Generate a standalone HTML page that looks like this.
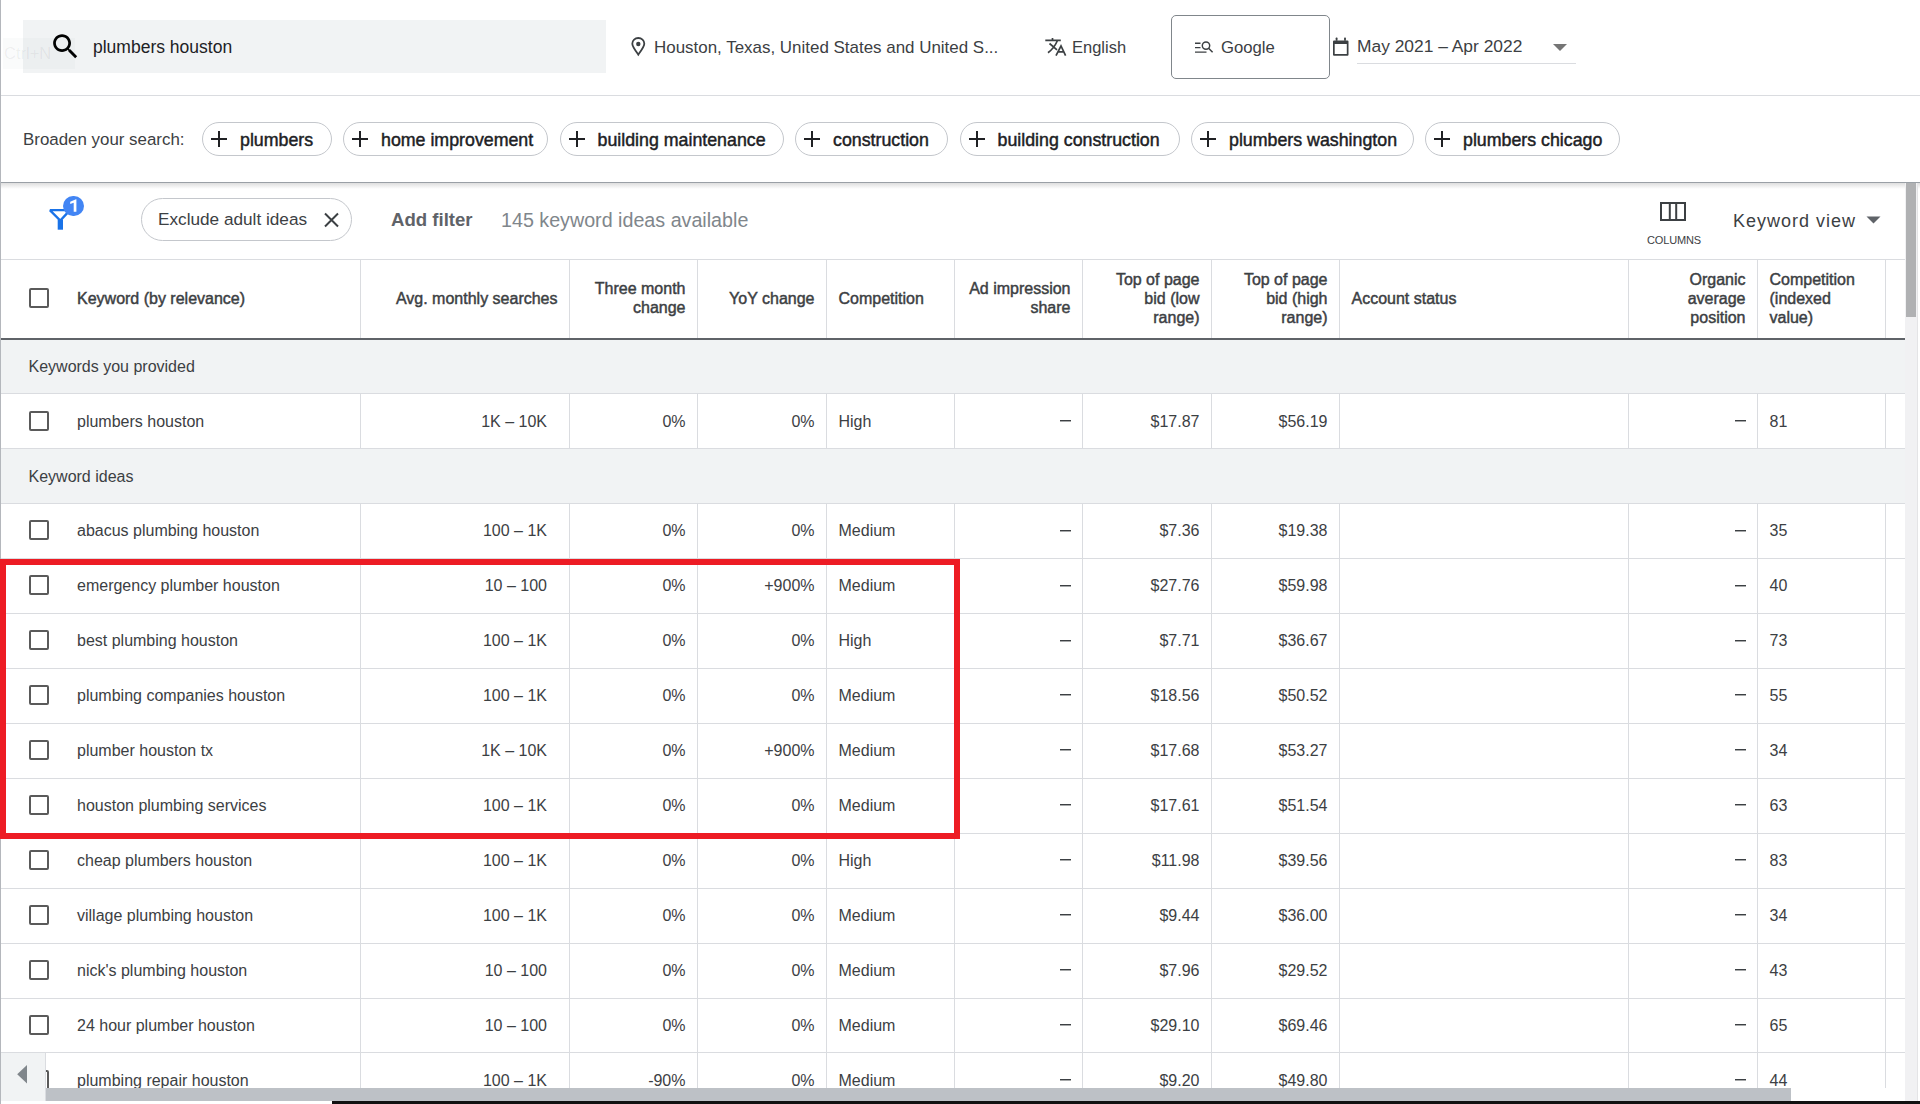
<!DOCTYPE html>
<html><head><meta charset="utf-8">
<style>
*{box-sizing:border-box;margin:0;padding:0}
html,body{width:1920px;height:1104px;overflow:hidden;background:#fff;font-family:"Liberation Sans",sans-serif;color:#3c4043}
.a{position:absolute}
.t{position:absolute;white-space:nowrap;line-height:20px}
svg{position:absolute;overflow:visible}
.chip{position:absolute;top:122px;height:34px;border:1px solid #c4c7cc;border-radius:17px;background:#fff}
.chip svg{left:8px;top:8px}
.chip span{position:absolute;left:37px;top:6.5px;line-height:20px;font-size:17.8px;font-weight:400;color:#202124;white-space:nowrap;-webkit-text-stroke:.45px #202124}
</style></head>
<body>
<!-- left page border -->
<div class="a" style="left:0;top:0;width:1px;height:1104px;background:#b4b7bc"></div>

<!-- TOP BAR -->
<div class="a" style="left:23px;top:20px;width:583px;height:53px;background:#f1f3f4"></div>
<svg style="left:48.6px;top:30.3px" width="33" height="33" viewBox="0 0 24 24"><path fill="#000" d="M15.5 14h-.79l-.28-.27C15.41 12.59 16 11.11 16 9.5 16 5.91 13.09 3 9.5 3S3 5.91 3 9.5 5.91 16 9.5 16c1.61 0 3.09-.59 4.23-1.57l.27.28v.79l5 4.99L20.49 19l-4.99-5zm-6 0C7.01 14 5 11.99 5 9.5S7.01 5 9.5 5 14 7.01 14 9.5 11.99 14 9.5 14z"/></svg>
<div class="t" style="left:93px;top:37px;font-size:17.5px;color:#202124">plumbers houston</div>
<div class="a" style="left:3px;top:38px;width:72px;height:31px;background:rgba(60,64,67,.025)"></div>
<div class="t" style="left:4px;top:43px;font-size:16.5px;color:rgba(60,64,67,.07)">Ctrl+N</div>

<svg style="left:631px;top:37px" width="15" height="19" viewBox="0 0 15 19"><path fill="none" stroke="#3c4043" stroke-width="1.8" d="M7.3 17.6C4.6 13.9 1.3 9.6 1.3 6.8 1.3 3.5 4 1 7.3 1s6 2.5 6 5.8c0 2.8-3.3 7.1-6 10.8z"/><circle cx="7.3" cy="7" r="2.2" fill="#3c4043"/></svg>
<div class="t" style="left:654px;top:38px;font-size:16.95px">Houston, Texas, United States and United S...</div>

<svg style="left:1045px;top:37px" width="21" height="19" viewBox="0 0 21 19"><g fill="none" stroke="#3c4043" stroke-width="1.7"><path d="M0.3 3.3h15.5M7.5 1v2.3M4.5 6.5l7.5 6.3M12.5 3.5C10.5 8 7.5 12.5 3 15.7M11 18.6l5-9.6 4.6 9.6M12.6 14.8h6.6"/></g></svg>
<div class="t" style="left:1072px;top:37px;font-size:16.5px">English</div>

<div class="a" style="left:1171px;top:15px;width:159px;height:64px;border:1px solid #80868b;border-radius:5px"></div>
<svg style="left:1194px;top:41px" width="20" height="14" viewBox="0 0 20 14"><g fill="none" stroke="#3c4043" stroke-width="1.45"><path d="M1 2.3h5.5M1 6.6h5.5M1 11.1h11.5"/><circle cx="12" cy="4.6" r="3.7"/><path d="M14.6 7.3l4 4"/></g></svg>
<div class="t" style="left:1221px;top:38px;font-size:16.7px">Google</div>

<svg style="left:1332px;top:37px" width="18" height="19" viewBox="0 0 18 19"><g fill="#3c4043"><rect x="3.7" y="0.6" width="1.8" height="3.2" rx=".6"/><rect x="12.1" y="0.6" width="1.8" height="3.2" rx=".6"/><path d="M1 4.4Q1 3.4 2 3.4h13.5q1 0 1 1v13.3q0 1-1 1H2q-1 0-1-1z M2.7 6.9v10.1h12.1V6.9z" fill-rule="evenodd"/></g></svg>
<div class="t" style="left:1357px;top:36px;font-size:17.4px">May 2021 – Apr 2022</div>
<svg style="left:1553px;top:44px" width="15" height="8" viewBox="0 0 15 8"><path d="M0 0h14L7 7z" fill="#757575"/></svg>
<div class="a" style="left:1357px;top:63px;width:219px;height:1px;background:#dadce0"></div>

<div class="a" style="left:1px;top:95px;width:1919px;height:1px;background:#dadce0"></div>

<!-- BROADEN -->
<div class="t" style="left:23px;top:130px;font-size:16.9px;color:#3c4043">Broaden your search:</div>

<!-- shadow separator -->
<div class="a" style="left:1px;top:182px;width:1919px;height:1px;background:#9aa0a6"></div>
<div class="a" style="left:1px;top:183px;width:1919px;height:6px;background:linear-gradient(rgba(0,0,0,.13),rgba(0,0,0,0))"></div>

<div class="chip" style="left:202px;width:130px"><svg width="16" height="16" viewBox="0 0 16 16"><path d="M8 0v16M0 8h16" stroke="#202124" stroke-width="2"/></svg><span>plumbers</span></div>
<div class="chip" style="left:343px;width:205px"><svg width="16" height="16" viewBox="0 0 16 16"><path d="M8 0v16M0 8h16" stroke="#202124" stroke-width="2"/></svg><span>home improvement</span></div>
<div class="chip" style="left:559.5px;width:224.0px"><svg width="16" height="16" viewBox="0 0 16 16"><path d="M8 0v16M0 8h16" stroke="#202124" stroke-width="2"/></svg><span>building maintenance</span></div>
<div class="chip" style="left:795px;width:153px"><svg width="16" height="16" viewBox="0 0 16 16"><path d="M8 0v16M0 8h16" stroke="#202124" stroke-width="2"/></svg><span>construction</span></div>
<div class="chip" style="left:959.5px;width:220.0px"><svg width="16" height="16" viewBox="0 0 16 16"><path d="M8 0v16M0 8h16" stroke="#202124" stroke-width="2"/></svg><span>building construction</span></div>
<div class="chip" style="left:1191px;width:222.5px"><svg width="16" height="16" viewBox="0 0 16 16"><path d="M8 0v16M0 8h16" stroke="#202124" stroke-width="2"/></svg><span>plumbers washington</span></div>
<div class="chip" style="left:1425px;width:195px"><svg width="16" height="16" viewBox="0 0 16 16"><path d="M8 0v16M0 8h16" stroke="#202124" stroke-width="2"/></svg><span>plumbers chicago</span></div>
<svg style="left:48px;top:207px" width="22" height="24" viewBox="0 0 22 24"><path d="M1.8 3.1H21M1.8 3.1L12.3 13.6L22 3.1" fill="none" stroke="#1a73e8" stroke-width="2.3" stroke-linejoin="miter"/><rect x="9.7" y="12.6" width="5.3" height="10.1" fill="#1a73e8"/></svg>
<div class="a" style="left:63.2px;top:195.6px;width:20.8px;height:20.8px;border-radius:50%;background:#4285f4"></div>
<svg style="left:0;top:0" width="1" height="1"><path d="M76.4 199.3V211.7H73.7V202.7L70.2 203.9V201.7L76 199.3Z" fill="#fff"/></svg>
<div class="a" style="left:141px;top:198px;width:211px;height:43px;border:1px solid #c4c7cc;border-radius:22px"></div>
<div class="t" style="left:158px;top:209px;font-size:17.2px;color:#3c4043">Exclude adult ideas</div>
<svg style="left:324px;top:213px" width="15" height="14" viewBox="0 0 15 14"><path d="M1 0.5l13 13M14 0.5l-13 13" stroke="#3c4043" stroke-width="2"/></svg>
<div class="t" style="left:391px;top:210px;font-size:18.6px;font-weight:700;color:#5f6368">Add filter</div>
<div class="t" style="left:501px;top:210px;font-size:19.7px;color:#80868b">145 keyword ideas available</div>
<svg style="left:1660px;top:202px" width="26" height="19" viewBox="0 0 26 19"><path d="M1 1h24v17H1zM9.8 1v17M16.2 1v17" fill="none" stroke="#3c4043" stroke-width="2"/></svg>
<div class="t" style="left:1647px;top:230px;font-size:11px;color:#3c4043;letter-spacing:-.15px">COLUMNS</div>
<div class="t" style="left:1733px;top:211px;font-size:18px;letter-spacing:1px;color:#3c4043">Keyword view</div>
<svg style="left:1866px;top:216px" width="15" height="8" viewBox="0 0 15 8"><path d="M0.5 0.5h14L7.5 7.5z" fill="#5f6368"/></svg>
<div class="a" style="left:1px;top:259px;width:1904px;height:1px;background:#dadce0"></div>
<div class="a" style="left:1px;top:338px;width:1904px;height:2px;background:#5f6368"></div>
<div class="a" style="left:360px;top:260px;width:1px;height:78px;background:#dadce0"></div>
<div class="a" style="left:569px;top:260px;width:1px;height:78px;background:#dadce0"></div>
<div class="a" style="left:697px;top:260px;width:1px;height:78px;background:#dadce0"></div>
<div class="a" style="left:826px;top:260px;width:1px;height:78px;background:#dadce0"></div>
<div class="a" style="left:954px;top:260px;width:1px;height:78px;background:#dadce0"></div>
<div class="a" style="left:1082px;top:260px;width:1px;height:78px;background:#dadce0"></div>
<div class="a" style="left:1211px;top:260px;width:1px;height:78px;background:#dadce0"></div>
<div class="a" style="left:1339px;top:260px;width:1px;height:78px;background:#dadce0"></div>
<div class="a" style="left:1628px;top:260px;width:1px;height:78px;background:#dadce0"></div>
<div class="a" style="left:1757px;top:260px;width:1px;height:78px;background:#dadce0"></div>
<div class="a" style="left:1885px;top:260px;width:1px;height:78px;background:#dadce0"></div>
<style>.hd{position:absolute;white-space:nowrap;font-size:16px;line-height:19px;color:#3c4043;-webkit-text-stroke:.45px #3c4043}</style>
<div class="cb" style="left:29px;top:288px"></div>
<div class="hd" style="left:77px;top:288.5px">Keyword (by relevance)</div>
<div class="hd" style="left:361px;width:196.5px;top:288.5px;text-align:right">Avg. monthly searches</div>
<div class="hd" style="left:570px;width:115.5px;top:279.0px;text-align:right">Three month<br>change</div>
<div class="hd" style="left:698px;width:116.5px;top:288.5px;text-align:right">YoY change</div>
<div class="hd" style="left:838.5px;top:288.5px">Competition</div>
<div class="hd" style="left:955px;width:115.5px;top:279.0px;text-align:right">Ad impression<br>share</div>
<div class="hd" style="left:1083px;width:116.5px;top:269.5px;text-align:right">Top of page<br>bid (low<br>range)</div>
<div class="hd" style="left:1212px;width:115.5px;top:269.5px;text-align:right">Top of page<br>bid (high<br>range)</div>
<div class="hd" style="left:1351.5px;top:288.5px">Account status</div>
<div class="hd" style="left:1629px;width:116.5px;top:269.5px;text-align:right">Organic<br>average<br>position</div>
<div class="hd" style="left:1769.5px;top:269.5px">Competition<br>(indexed<br>value)</div>
<style>.cb{position:absolute;width:20px;height:20px;border:2.2px solid #5a5a5a;border-radius:2px;background:#fff}.td{position:absolute;white-space:nowrap;font-size:16px;line-height:20px;color:#3c4043}</style>
<div class="a" style="left:1px;top:340px;width:1904px;height:53px;background:#f1f3f4"></div>
<div class="a" style="left:1px;top:449px;width:1904px;height:54px;background:#f1f3f4"></div>
<div class="td" style="left:28.5px;top:356.8px">Keywords you provided</div>
<div class="td" style="left:28.5px;top:467.1875px">Keyword ideas</div>
<div class="a" style="left:1px;top:393px;width:1904px;height:1px;background:#dadce0"></div>
<div class="a" style="left:1px;top:448px;width:1904px;height:1px;background:#dadce0"></div>
<div class="a" style="left:1px;top:503px;width:1904px;height:1px;background:#dadce0"></div>
<div class="a" style="left:1px;top:558px;width:1904px;height:1px;background:#dadce0"></div>
<div class="a" style="left:1px;top:613px;width:1904px;height:1px;background:#dadce0"></div>
<div class="a" style="left:1px;top:668px;width:1904px;height:1px;background:#dadce0"></div>
<div class="a" style="left:1px;top:723px;width:1904px;height:1px;background:#dadce0"></div>
<div class="a" style="left:1px;top:778px;width:1904px;height:1px;background:#dadce0"></div>
<div class="a" style="left:1px;top:833px;width:1904px;height:1px;background:#dadce0"></div>
<div class="a" style="left:1px;top:888px;width:1904px;height:1px;background:#dadce0"></div>
<div class="a" style="left:1px;top:943px;width:1904px;height:1px;background:#dadce0"></div>
<div class="a" style="left:1px;top:998px;width:1904px;height:1px;background:#dadce0"></div>
<div class="a" style="left:1px;top:1052px;width:1904px;height:1px;background:#dadce0"></div>
<div class="a" style="left:360px;top:394px;width:1px;height:54px;background:#dadce0"></div>
<div class="a" style="left:360px;top:504px;width:1px;height:584px;background:#dadce0"></div>
<div class="a" style="left:569px;top:394px;width:1px;height:54px;background:#dadce0"></div>
<div class="a" style="left:569px;top:504px;width:1px;height:584px;background:#dadce0"></div>
<div class="a" style="left:697px;top:394px;width:1px;height:54px;background:#dadce0"></div>
<div class="a" style="left:697px;top:504px;width:1px;height:584px;background:#dadce0"></div>
<div class="a" style="left:826px;top:394px;width:1px;height:54px;background:#dadce0"></div>
<div class="a" style="left:826px;top:504px;width:1px;height:584px;background:#dadce0"></div>
<div class="a" style="left:954px;top:394px;width:1px;height:54px;background:#dadce0"></div>
<div class="a" style="left:954px;top:504px;width:1px;height:584px;background:#dadce0"></div>
<div class="a" style="left:1082px;top:394px;width:1px;height:54px;background:#dadce0"></div>
<div class="a" style="left:1082px;top:504px;width:1px;height:584px;background:#dadce0"></div>
<div class="a" style="left:1211px;top:394px;width:1px;height:54px;background:#dadce0"></div>
<div class="a" style="left:1211px;top:504px;width:1px;height:584px;background:#dadce0"></div>
<div class="a" style="left:1339px;top:394px;width:1px;height:54px;background:#dadce0"></div>
<div class="a" style="left:1339px;top:504px;width:1px;height:584px;background:#dadce0"></div>
<div class="a" style="left:1628px;top:394px;width:1px;height:54px;background:#dadce0"></div>
<div class="a" style="left:1628px;top:504px;width:1px;height:584px;background:#dadce0"></div>
<div class="a" style="left:1757px;top:394px;width:1px;height:54px;background:#dadce0"></div>
<div class="a" style="left:1757px;top:504px;width:1px;height:584px;background:#dadce0"></div>
<div class="a" style="left:1885px;top:394px;width:1px;height:54px;background:#dadce0"></div>
<div class="a" style="left:1885px;top:504px;width:1px;height:584px;background:#dadce0"></div>
<div class="cb" style="left:28.7px;top:410.56249999999994px"></div>
<div class="td" style="left:77px;top:411.56249999999994px">plumbers houston</div>
<div class="td" style="left:361px;width:186px;top:411.56249999999994px;text-align:right">1K – 10K</div>
<div class="td" style="left:570px;width:115.5px;top:411.56249999999994px;text-align:right">0%</div>
<div class="td" style="left:698px;width:116.5px;top:411.56249999999994px;text-align:right">0%</div>
<div class="td" style="left:838.5px;top:411.56249999999994px">High</div>
<div class="a" style="left:1059.5px;top:420px;width:11px;height:1px;background:#3c4043;box-shadow:0 1px 0 rgba(60,64,67,.45)"></div>
<div class="td" style="left:1083px;width:116.5px;top:411.56249999999994px;text-align:right">$17.87</div>
<div class="td" style="left:1212px;width:115.5px;top:411.56249999999994px;text-align:right">$56.19</div>
<div class="a" style="left:1734.5px;top:420px;width:11px;height:1px;background:#3c4043;box-shadow:0 1px 0 rgba(60,64,67,.45)"></div>
<div class="td" style="left:1769.5px;top:411.56249999999994px">81</div>
<div class="cb" style="left:28.7px;top:520.4125px"></div>
<div class="td" style="left:77px;top:521.4125px">abacus plumbing houston</div>
<div class="td" style="left:361px;width:186px;top:521.4125px;text-align:right">100 – 1K</div>
<div class="td" style="left:570px;width:115.5px;top:521.4125px;text-align:right">0%</div>
<div class="td" style="left:698px;width:116.5px;top:521.4125px;text-align:right">0%</div>
<div class="td" style="left:838.5px;top:521.4125px">Medium</div>
<div class="a" style="left:1059.5px;top:530px;width:11px;height:1px;background:#3c4043;box-shadow:0 1px 0 rgba(60,64,67,.45)"></div>
<div class="td" style="left:1083px;width:116.5px;top:521.4125px;text-align:right">$7.36</div>
<div class="td" style="left:1212px;width:115.5px;top:521.4125px;text-align:right">$19.38</div>
<div class="a" style="left:1734.5px;top:530px;width:11px;height:1px;background:#3c4043;box-shadow:0 1px 0 rgba(60,64,67,.45)"></div>
<div class="td" style="left:1769.5px;top:521.4125px">35</div>
<div class="cb" style="left:28.7px;top:575.3375px"></div>
<div class="td" style="left:77px;top:576.3375px">emergency plumber houston</div>
<div class="td" style="left:361px;width:186px;top:576.3375px;text-align:right">10 – 100</div>
<div class="td" style="left:570px;width:115.5px;top:576.3375px;text-align:right">0%</div>
<div class="td" style="left:698px;width:116.5px;top:576.3375px;text-align:right">+900%</div>
<div class="td" style="left:838.5px;top:576.3375px">Medium</div>
<div class="a" style="left:1059.5px;top:585px;width:11px;height:1px;background:#3c4043;box-shadow:0 1px 0 rgba(60,64,67,.45)"></div>
<div class="td" style="left:1083px;width:116.5px;top:576.3375px;text-align:right">$27.76</div>
<div class="td" style="left:1212px;width:115.5px;top:576.3375px;text-align:right">$59.98</div>
<div class="a" style="left:1734.5px;top:585px;width:11px;height:1px;background:#3c4043;box-shadow:0 1px 0 rgba(60,64,67,.45)"></div>
<div class="td" style="left:1769.5px;top:576.3375px">40</div>
<div class="cb" style="left:28.7px;top:630.2625px"></div>
<div class="td" style="left:77px;top:631.2625px">best plumbing houston</div>
<div class="td" style="left:361px;width:186px;top:631.2625px;text-align:right">100 – 1K</div>
<div class="td" style="left:570px;width:115.5px;top:631.2625px;text-align:right">0%</div>
<div class="td" style="left:698px;width:116.5px;top:631.2625px;text-align:right">0%</div>
<div class="td" style="left:838.5px;top:631.2625px">High</div>
<div class="a" style="left:1059.5px;top:640px;width:11px;height:1px;background:#3c4043;box-shadow:0 1px 0 rgba(60,64,67,.45)"></div>
<div class="td" style="left:1083px;width:116.5px;top:631.2625px;text-align:right">$7.71</div>
<div class="td" style="left:1212px;width:115.5px;top:631.2625px;text-align:right">$36.67</div>
<div class="a" style="left:1734.5px;top:640px;width:11px;height:1px;background:#3c4043;box-shadow:0 1px 0 rgba(60,64,67,.45)"></div>
<div class="td" style="left:1769.5px;top:631.2625px">73</div>
<div class="cb" style="left:28.7px;top:685.1875px"></div>
<div class="td" style="left:77px;top:686.1875px">plumbing companies houston</div>
<div class="td" style="left:361px;width:186px;top:686.1875px;text-align:right">100 – 1K</div>
<div class="td" style="left:570px;width:115.5px;top:686.1875px;text-align:right">0%</div>
<div class="td" style="left:698px;width:116.5px;top:686.1875px;text-align:right">0%</div>
<div class="td" style="left:838.5px;top:686.1875px">Medium</div>
<div class="a" style="left:1059.5px;top:694px;width:11px;height:1px;background:#3c4043;box-shadow:0 1px 0 rgba(60,64,67,.45)"></div>
<div class="td" style="left:1083px;width:116.5px;top:686.1875px;text-align:right">$18.56</div>
<div class="td" style="left:1212px;width:115.5px;top:686.1875px;text-align:right">$50.52</div>
<div class="a" style="left:1734.5px;top:694px;width:11px;height:1px;background:#3c4043;box-shadow:0 1px 0 rgba(60,64,67,.45)"></div>
<div class="td" style="left:1769.5px;top:686.1875px">55</div>
<div class="cb" style="left:28.7px;top:740.1125px"></div>
<div class="td" style="left:77px;top:741.1125px">plumber houston tx</div>
<div class="td" style="left:361px;width:186px;top:741.1125px;text-align:right">1K – 10K</div>
<div class="td" style="left:570px;width:115.5px;top:741.1125px;text-align:right">0%</div>
<div class="td" style="left:698px;width:116.5px;top:741.1125px;text-align:right">+900%</div>
<div class="td" style="left:838.5px;top:741.1125px">Medium</div>
<div class="a" style="left:1059.5px;top:749px;width:11px;height:1px;background:#3c4043;box-shadow:0 1px 0 rgba(60,64,67,.45)"></div>
<div class="td" style="left:1083px;width:116.5px;top:741.1125px;text-align:right">$17.68</div>
<div class="td" style="left:1212px;width:115.5px;top:741.1125px;text-align:right">$53.27</div>
<div class="a" style="left:1734.5px;top:749px;width:11px;height:1px;background:#3c4043;box-shadow:0 1px 0 rgba(60,64,67,.45)"></div>
<div class="td" style="left:1769.5px;top:741.1125px">34</div>
<div class="cb" style="left:28.7px;top:795.0375px"></div>
<div class="td" style="left:77px;top:796.0375px">houston plumbing services</div>
<div class="td" style="left:361px;width:186px;top:796.0375px;text-align:right">100 – 1K</div>
<div class="td" style="left:570px;width:115.5px;top:796.0375px;text-align:right">0%</div>
<div class="td" style="left:698px;width:116.5px;top:796.0375px;text-align:right">0%</div>
<div class="td" style="left:838.5px;top:796.0375px">Medium</div>
<div class="a" style="left:1059.5px;top:804px;width:11px;height:1px;background:#3c4043;box-shadow:0 1px 0 rgba(60,64,67,.45)"></div>
<div class="td" style="left:1083px;width:116.5px;top:796.0375px;text-align:right">$17.61</div>
<div class="td" style="left:1212px;width:115.5px;top:796.0375px;text-align:right">$51.54</div>
<div class="a" style="left:1734.5px;top:804px;width:11px;height:1px;background:#3c4043;box-shadow:0 1px 0 rgba(60,64,67,.45)"></div>
<div class="td" style="left:1769.5px;top:796.0375px">63</div>
<div class="cb" style="left:28.7px;top:849.9625px"></div>
<div class="td" style="left:77px;top:850.9625px">cheap plumbers houston</div>
<div class="td" style="left:361px;width:186px;top:850.9625px;text-align:right">100 – 1K</div>
<div class="td" style="left:570px;width:115.5px;top:850.9625px;text-align:right">0%</div>
<div class="td" style="left:698px;width:116.5px;top:850.9625px;text-align:right">0%</div>
<div class="td" style="left:838.5px;top:850.9625px">High</div>
<div class="a" style="left:1059.5px;top:859px;width:11px;height:1px;background:#3c4043;box-shadow:0 1px 0 rgba(60,64,67,.45)"></div>
<div class="td" style="left:1083px;width:116.5px;top:850.9625px;text-align:right">$11.98</div>
<div class="td" style="left:1212px;width:115.5px;top:850.9625px;text-align:right">$39.56</div>
<div class="a" style="left:1734.5px;top:859px;width:11px;height:1px;background:#3c4043;box-shadow:0 1px 0 rgba(60,64,67,.45)"></div>
<div class="td" style="left:1769.5px;top:850.9625px">83</div>
<div class="cb" style="left:28.7px;top:904.8875px"></div>
<div class="td" style="left:77px;top:905.8875px">village plumbing houston</div>
<div class="td" style="left:361px;width:186px;top:905.8875px;text-align:right">100 – 1K</div>
<div class="td" style="left:570px;width:115.5px;top:905.8875px;text-align:right">0%</div>
<div class="td" style="left:698px;width:116.5px;top:905.8875px;text-align:right">0%</div>
<div class="td" style="left:838.5px;top:905.8875px">Medium</div>
<div class="a" style="left:1059.5px;top:914px;width:11px;height:1px;background:#3c4043;box-shadow:0 1px 0 rgba(60,64,67,.45)"></div>
<div class="td" style="left:1083px;width:116.5px;top:905.8875px;text-align:right">$9.44</div>
<div class="td" style="left:1212px;width:115.5px;top:905.8875px;text-align:right">$36.00</div>
<div class="a" style="left:1734.5px;top:914px;width:11px;height:1px;background:#3c4043;box-shadow:0 1px 0 rgba(60,64,67,.45)"></div>
<div class="td" style="left:1769.5px;top:905.8875px">34</div>
<div class="cb" style="left:28.7px;top:959.8125px"></div>
<div class="td" style="left:77px;top:960.8125px">nick's plumbing houston</div>
<div class="td" style="left:361px;width:186px;top:960.8125px;text-align:right">10 – 100</div>
<div class="td" style="left:570px;width:115.5px;top:960.8125px;text-align:right">0%</div>
<div class="td" style="left:698px;width:116.5px;top:960.8125px;text-align:right">0%</div>
<div class="td" style="left:838.5px;top:960.8125px">Medium</div>
<div class="a" style="left:1059.5px;top:969px;width:11px;height:1px;background:#3c4043;box-shadow:0 1px 0 rgba(60,64,67,.45)"></div>
<div class="td" style="left:1083px;width:116.5px;top:960.8125px;text-align:right">$7.96</div>
<div class="td" style="left:1212px;width:115.5px;top:960.8125px;text-align:right">$29.52</div>
<div class="a" style="left:1734.5px;top:969px;width:11px;height:1px;background:#3c4043;box-shadow:0 1px 0 rgba(60,64,67,.45)"></div>
<div class="td" style="left:1769.5px;top:960.8125px">43</div>
<div class="cb" style="left:28.7px;top:1014.7375px"></div>
<div class="td" style="left:77px;top:1015.7375px">24 hour plumber houston</div>
<div class="td" style="left:361px;width:186px;top:1015.7375px;text-align:right">10 – 100</div>
<div class="td" style="left:570px;width:115.5px;top:1015.7375px;text-align:right">0%</div>
<div class="td" style="left:698px;width:116.5px;top:1015.7375px;text-align:right">0%</div>
<div class="td" style="left:838.5px;top:1015.7375px">Medium</div>
<div class="a" style="left:1059.5px;top:1024px;width:11px;height:1px;background:#3c4043;box-shadow:0 1px 0 rgba(60,64,67,.45)"></div>
<div class="td" style="left:1083px;width:116.5px;top:1015.7375px;text-align:right">$29.10</div>
<div class="td" style="left:1212px;width:115.5px;top:1015.7375px;text-align:right">$69.46</div>
<div class="a" style="left:1734.5px;top:1024px;width:11px;height:1px;background:#3c4043;box-shadow:0 1px 0 rgba(60,64,67,.45)"></div>
<div class="td" style="left:1769.5px;top:1015.7375px">65</div>
<div class="cb" style="left:28.7px;top:1069.6625000000001px"></div>
<div class="td" style="left:77px;top:1070.6625000000001px">plumbing repair houston</div>
<div class="td" style="left:361px;width:186px;top:1070.6625000000001px;text-align:right">100 – 1K</div>
<div class="td" style="left:570px;width:115.5px;top:1070.6625000000001px;text-align:right">-90%</div>
<div class="td" style="left:698px;width:116.5px;top:1070.6625000000001px;text-align:right">0%</div>
<div class="td" style="left:838.5px;top:1070.6625000000001px">Medium</div>
<div class="a" style="left:1059.5px;top:1079px;width:11px;height:1px;background:#3c4043;box-shadow:0 1px 0 rgba(60,64,67,.45)"></div>
<div class="td" style="left:1083px;width:116.5px;top:1070.6625000000001px;text-align:right">$9.20</div>
<div class="td" style="left:1212px;width:115.5px;top:1070.6625000000001px;text-align:right">$49.80</div>
<div class="a" style="left:1734.5px;top:1079px;width:11px;height:1px;background:#3c4043;box-shadow:0 1px 0 rgba(60,64,67,.45)"></div>
<div class="td" style="left:1769.5px;top:1070.6625000000001px">44</div>
<div class="a" style="left:1905px;top:183px;width:12px;height:921px;background:#f1f1f3"></div>
<div class="a" style="left:1906px;top:183px;width:10px;height:134px;background:#b0b1b3"></div>
<div class="a" style="left:1917px;top:183px;width:1px;height:921px;background:#e4e4e6"></div>
<div class="a" style="left:1px;top:1053px;width:45px;height:48px;background:#f1f3f4;border-right:1px solid #dadce0"></div>
<svg style="left:17px;top:1065px" width="10" height="19" viewBox="0 0 10 19"><path d="M10 0v18.5L0.2 9.25z" fill="#80868b"/></svg>
<div class="a" style="left:46px;top:1088px;width:1745px;height:13px;background:#bdc1c6"></div>
<div class="a" style="left:332px;top:1101px;width:1588px;height:3px;background:#111"></div>
<div class="a" style="left:0;top:559px;width:960px;height:280px;border:6px solid #ed1c24"></div>
</body></html>
